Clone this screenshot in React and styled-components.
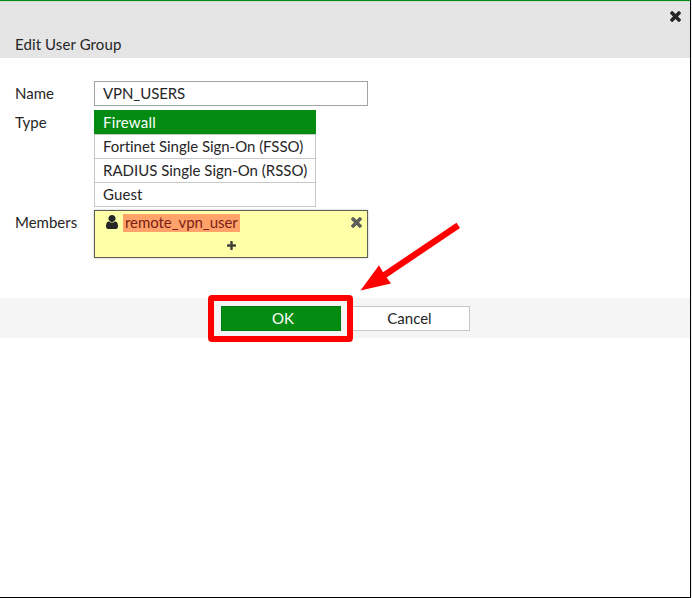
import React from "react";
import styled, { createGlobalStyle } from "styled-components";

const GlobalStyle = createGlobalStyle`
  *, *::before, *::after { box-sizing: border-box; }
  body {
    margin: 0;
    background: #f0f1f3;
    color: #262626;
    font: 15px/24px Lato, sans-serif;
    font-variant-ligatures: none;
    overflow: hidden;
  }
`;

const Panel = styled.main`
  position: relative;
  display: flex;
  flex-direction: column;
  width: 691px;
  height: 598px;
  background: #fff;
  border: solid #000;
  border-width: 0 1px 1px 0;
`;

const Header = styled.header`
  display: flex;
  justify-content: space-between;
  height: 58px;
  padding: 9px 9px 0 15px;
  border-top: 1px solid #048b11;
  background: #e5e5e5;
  box-shadow: inset 0 1px #d3dfd4;
`;

const Title = styled.h1`
  margin: 22px 0 0;
  font-size: 15px;
  font-weight: 400;
  line-height: 24px;
  letter-spacing: 0.1px;
`;

const IconButton = styled.button`
  display: flex;
  align-self: flex-start;
  padding: 0;
  border: 0;
  background: none;
  color: ${(p) => p.$color};
  margin: ${(p) => p.$margin || 0};
`;

const Icon = styled.svg`
  display: block;
  flex: none;
  width: ${(p) => p.$w}px;
  height: ${(p) => p.$h}px;
  margin-top: ${(p) => p.$top || 0}px;
  fill: currentColor;
`;

const Form = styled.section`
  display: flex;
  flex-direction: column;
  height: 240px;
  padding: 23px 15px 0;
`;

const Field = styled.div`
  display: grid;
  grid-template-columns: 79px auto;
  justify-content: start;
  align-items: start;
  margin-bottom: ${(p) => p.$gap || 0}px;
`;

const Label = styled.label`
  line-height: 25px;
`;

const TextInput = styled.input`
  width: 274px;
  height: 25px;
  padding: 0 8px 2px;
  border: 1px solid #a3a3a3;
  border-radius: 0;
  background: #fff;
  color: inherit;
  font: inherit;
  letter-spacing: -0.08px;
  outline: 0;
`;

const Options = styled.div`
  display: flex;
  flex-direction: column;
  width: 222px;
`;

const Option = styled.div`
  height: 24px;
  padding: 0 0 0 8px;
  border: 1px solid ${(p) => (p.$selected ? "#048b11" : "#c8c8c8")};
  border-bottom-width: 0;
  background: ${(p) => (p.$selected ? "#048b11" : "#fff")};
  color: ${(p) => (p.$selected ? "#fff" : "inherit")};
  line-height: 23px;
  letter-spacing: ${(p) => p.$tracking}px;
  white-space: nowrap;
  &:last-child {
    height: 25px;
    border-bottom-width: 1px;
  }
`;

const Members = styled.div`
  width: 274px;
  height: 48px;
  border: 1px solid #5f5f5a;
  background: #ffffa8;
  box-shadow: 0 0 2px #bbb;
`;

const Member = styled.div`
  display: flex;
  align-items: flex-start;
  height: 24px;
  padding: 3px 5px 0 11px;
`;

const MemberName = styled.span`
  width: 117px;
  height: 18px;
  margin-left: 5px;
  padding: 0 2px;
  background: #ffa36b;
  color: #7c1d15;
  line-height: 16px;
  letter-spacing: -0.06px;
`;

const AddRow = styled.div`
  display: flex;
  justify-content: center;
  padding: 6px 0 0;
`;

const Footer = styled.footer`
  display: flex;
  justify-content: center;
  gap: 9px;
  height: 40px;
  padding-top: 8px;
  background: #f5f5f5;
`;

const Button = styled.button`
  width: 120px;
  height: 25px;
  padding: 0 0 1px ${(p) => (p.$primary ? 5 : 0)}px;
  border: 1px solid ${(p) => (p.$primary ? "#047b0e" : "#c8c8c8")};
  background: ${(p) => (p.$primary ? "#048b11" : "#fff")};
  color: ${(p) => (p.$primary ? "#fff" : "#262626")};
  font: inherit;
  line-height: 22px;
`;

const Highlight = styled.div`
  position: absolute;
  left: 208px;
  top: 295px;
  width: 145px;
  height: 47px;
  border: 6px solid #f00;
  border-radius: 4px;
  pointer-events: none;
`;

const Arrow = styled.svg`
  position: absolute;
  left: 355px;
  top: 218px;
  width: 110px;
  height: 78px;
  fill: #f00;
  pointer-events: none;
`;

const TimesIcon = ({ size }) => (
  <Icon $w={size} $h={size} viewBox="302 366 1188 1188" aria-hidden="true">
    <path d="M1490 1322q0 40-28 68l-136 136q-28 28-68 28t-68-28l-294-294-294 294q-28 28-68 28t-68-28l-136-136q-28-28-28-68t28-68l294-294-294-294q-28-28-28-68t28-68l136-136q28-28 68-28t68 28l294 294 294-294q28-28 68-28t68 28l136 136q28 28 28 68t-28 68l-294 294 294 294q28 28 28 68z" />
  </Icon>
);

const UserIcon = () => (
  <Icon $w={12} $h={14} $top={1} viewBox="256 128 1280 1536" preserveAspectRatio="none" aria-hidden="true">
    <path d="M1536 1399q0 109-62.5 187t-150.5 78h-854q-88 0-150.5-78t-62.5-187q0-85 8.5-160.5t31.5-152 58.5-131 94-89 134.5-34.5q131 128 313 128t313-128q76 0 134.5 34.5t94 89 58.5 131 31.5 152 8.5 160.5zm-256-887q0 159-112.5 271.5t-271.5 112.5-271.5-112.5-112.5-271.5 112.5-271.5 271.5-112.5 271.5 112.5 112.5 271.5z" />
  </Icon>
);

const PlusIcon = () => (
  <Icon $w={9} $h={9} viewBox="192 128 1408 1408" aria-hidden="true">
    <path d="M1600 736v192q0 40-28 68t-68 28h-416v416q0 40-28 68t-68 28h-192q-40 0-68-28t-28-68v-416h-416q-40 0-68-28t-28-68v-192q0-40 28-68t68-28h416v-416q0-40 28-68t68-28h192q40 0 68 28t28 68v416h416q40 0 68 28t28 68z" />
  </Icon>
);

const types = [
  { name: "Firewall", tracking: 0.2 },
  { name: "Fortinet Single Sign-On (FSSO)", tracking: -0.03 },
  { name: "RADIUS Single Sign-On (RSSO)", tracking: 0 },
  { name: "Guest", tracking: 0.1 },
];

export default function App() {
  return (
    <>
      <GlobalStyle />
      <Panel>
        <Header>
          <Title>Edit User Group</Title>
          <IconButton $color="#262626" $margin="1px 0 0" aria-label="Close">
            <TimesIcon size={11} />
          </IconButton>
        </Header>
        <Form>
          <Field $gap={4}>
            <Label htmlFor="name">Name</Label>
            <TextInput id="name" defaultValue="VPN_USERS" />
          </Field>
          <Field $gap={3}>
            <Label>Type</Label>
            <Options>
              {types.map(({ name, tracking }, i) => (
                <Option key={name} $selected={i === 0} $tracking={tracking}>{name}</Option>
              ))}
            </Options>
          </Field>
          <Field>
            <Label>Members</Label>
            <Members>
              <Member>
                <UserIcon />
                <MemberName>remote_vpn_user</MemberName>
                <IconButton $color="#5d5d5b" $margin="3px 0 0 auto" aria-label="Remove">
                  <TimesIcon size={11} />
                </IconButton>
              </Member>
              <AddRow>
                <IconButton $color="#40403a" aria-label="Add">
                  <PlusIcon />
                </IconButton>
              </AddRow>
            </Members>
          </Field>
        </Form>
        <Footer>
          <Button $primary>OK</Button>
          <Button>Cancel</Button>
        </Footer>
        <Highlight />
        <Arrow viewBox="355 218 110 78" aria-hidden="true">
          <path d="M360.5 290.5 379 265.3 383 272.2 456.5 222.8 460 228 386.6 277.5 391 283.5Z" />
        </Arrow>
      </Panel>
    </>
  );
}
